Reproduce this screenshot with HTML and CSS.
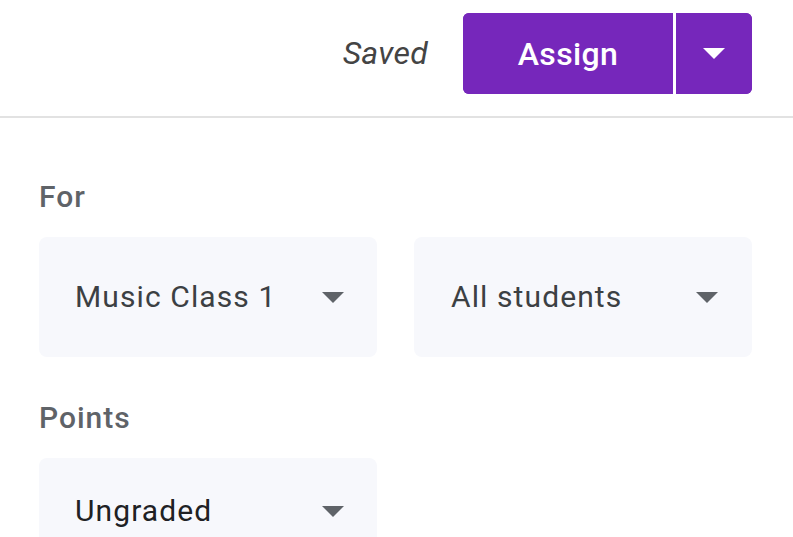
FILE: index.html
```html
<!doctype html>
<html>
<head>
<meta charset="utf-8">
<title>Assign</title>
<link rel="stylesheet" href="styles.css">
</head>
<body>
<div class="topbar">
	<span class="saved">Saved</span>
	<div class="assign">
		<button class="assign-main">Assign</button>
		<button class="assign-more"><span class="caret caret-white"></span></button>
	</div>
</div>

<div class="panel">
	<div class="label label-for">For</div>
	<div class="row">
		<div class="select"><span>Music Class 1</span><span class="caret"></span></div>
		<div class="select select-right"><span>All students</span><span class="caret"></span></div>
	</div>

	<div class="label label-points">Points</div>
	<div class="row">
		<div class="select select-short"><span>Ungraded</span><span class="caret"></span></div>
	</div>
</div>
</body>
</html>
```

FILE: styles.css
```css
*{ margin:0; padding:0; box-sizing:border-box;}
body{ background:#fff; font-family:Roboto, "Noto Sans", sans-serif; color:#3c4043; overflow:hidden; height:537px;}

.topbar{ height:118px; padding:13px 41px 0 0; display:flex; justify-content:flex-end; align-items:flex-start; border-bottom:2px solid #e2e2e2;}
.saved{ font-size:32px; font-style:italic; color:#444; line-height:81px; margin-right:35px; letter-spacing:0.3px;}
.assign{ display:flex; height:81px; border-radius:6px; overflow:hidden; background:#7627bb;}
.assign button{ border:0; background:#7627bb; color:#fff; font-family:inherit; display:flex; align-items:center; justify-content:center;}
.assign-main{ width:213px; font-size:32px; font-weight:500; letter-spacing:0.4px; border-right:3px solid #fff !important;}
.assign-more{ width:76px;}

.caret{ width:0; height:0; border-left:11px solid transparent; border-right:11px solid transparent; border-top:11px solid #5f6368;}
.caret-white{ border-top-color:#fff;}

.panel{ padding:0 41px 0 39px;}
.label{ font-size:30px; font-weight:500; color:#5f6368; line-height:36px; letter-spacing:1px;}
.label-for{ margin-top:61px;}
.label-points{ margin-top:43px;}
.row{ display:grid; grid-template-columns:1fr 1fr; column-gap:37px; margin-top:22px;}
.select{ height:120px; background:#f7f8fc; border-radius:8px; display:flex; align-items:center; justify-content:space-between; padding:0 33px 0 36px; font-size:30px; line-height:36px; color:#3c4043; letter-spacing:1.1px;}
.select-right{ padding:0 34px 0 37px;}
.select-short{ height:106px; color:#202124;}
```
